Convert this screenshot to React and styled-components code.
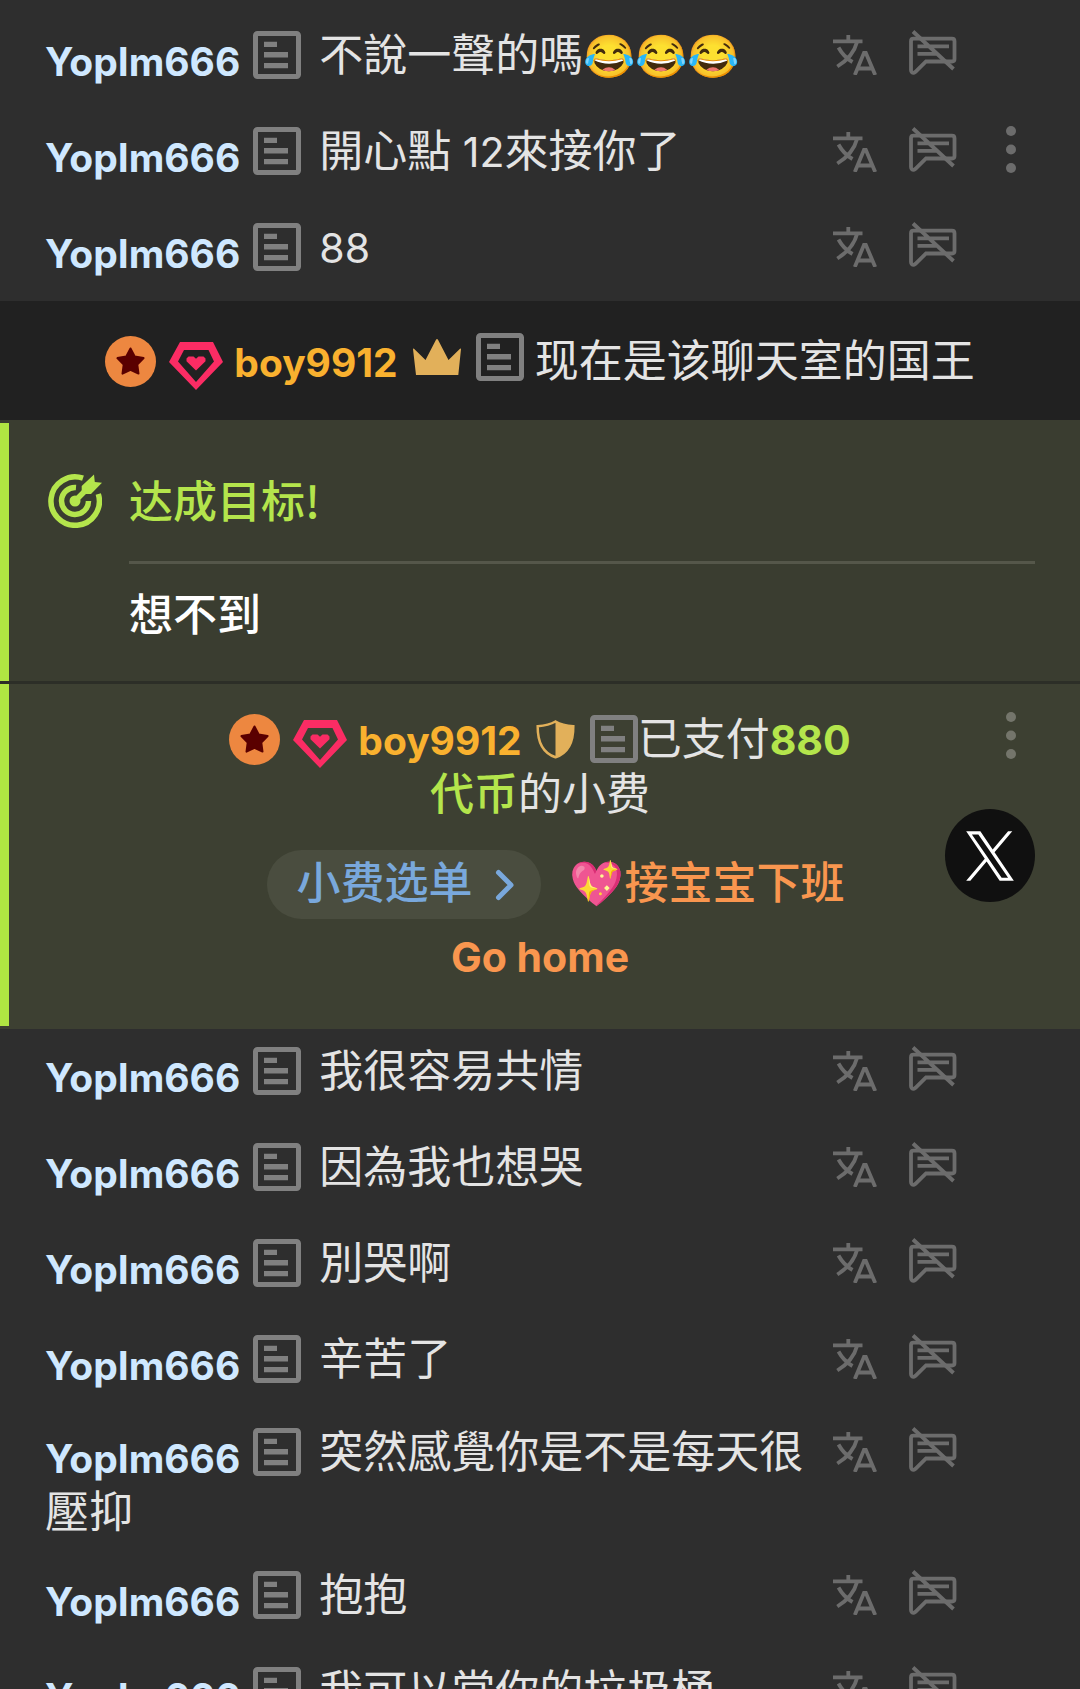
import React from 'react'
import styled, { createGlobalStyle } from 'styled-components'

const GlobalStyle = createGlobalStyle`
  body {
    margin: 0;
    background: #2e2e2e;
  }

  * {
    box-sizing: border-box;
  }

  button {
    padding: 0;
    border: 0;
    background: none;
    color: inherit;
    font: inherit;
    cursor: pointer;
  }

  svg {
    display: block;
  }
`

const Chat = styled.main`
  position: relative;
  height: 100vh;
  overflow: hidden;
  color: #e4e4e4;
  font-family: Roboto, 'Noto Sans CJK SC', 'Noto Color Emoji', sans-serif;
  font-size: 44px;
  line-height: 50px;
`

const MessageList = styled.ul`
  margin: 0;
  padding: ${(props) => props.$top || 0}px 0 0;
  list-style: none;
  font-family: Roboto, 'Noto Sans CJK TC', 'Noto Color Emoji', sans-serif;
`

const Row = styled.li`
  display: grid;
  grid-template-columns: minmax(0, 1fr) auto;
  align-content: center;
  align-items: start;
  min-height: 96px;
  padding: 14px 63px 15px 45px;
`

const MessageText = styled.div`
  padding-top: 1px;
`

const Actions = styled.div`
  display: grid;
  grid-template-columns: 44px 48px 28px;
  column-gap: 32px;
  color: #6c6c6c;
`

const MoreCell = styled.span`
  display: flex;
  justify-content: flex-end;
`

// latin words and digits sit a little smaller than the chinese around them
const Latin = styled.span`
  font-family: Inter, sans-serif;
  font-size: 41px;
`

const Emoji = styled.span`
  font-size: 42px;
`

const Author = styled.span`
  color: ${(props) => (props.$vip ? '#f9b12f' : '#cfe8ff')};
  font-family: Inter, sans-serif;
  font-size: 39px;
  font-weight: 700;
`

const ChatAuthor = styled(Author)`
  line-height: 58px;
  vertical-align: -5px;
`

const InlineIcon = styled.span`
  display: inline-block;
  margin-left: ${(props) => props.$left || 0}px;
  margin-right: ${(props) => props.$right || 0}px;
  vertical-align: ${(props) => -props.$drop}px;
`

const KingLine = styled.div`
  height: 119px;
  padding-top: 32px;
  background: #212121;
  text-align: center;
  white-space: nowrap;
`

const Panel = styled.section`
  padding: ${(props) => (props.$goal ? '3px 0 0' : '0 0 3px')};
  border-bottom: ${(props) => (props.$goal ? '3px solid #2c2e27' : '0')};
  background: ${(props) => (props.$goal ? '#3a3d30' : '#3d4032')};
`

const Goal = styled.div`
  display: grid;
  grid-template-columns: 54px minmax(0, 1fr);
  column-gap: 27px;
  height: 258px;
  padding: 51px 45px 0 48px;
  box-shadow: inset 9px 0 0 #b0e642;
`

const GoalTitle = styled.h2`
  margin: 0;
  padding-bottom: 37px;
  border-bottom: 3px solid #55574a;
  color: #b4e54c;
  font-family: 'Noto Sans CJK SC', sans-serif;
  font-size: 44px;
  font-weight: 500;
`

const GoalText = styled.p`
  margin: 0;
  padding-top: 27px;
  color: #ffffff;
  font-weight: 500;
`

const Tip = styled.div`
  position: relative;
  height: 342px;
  padding: 29px 225px 0;
  box-shadow: inset 9px 0 0 #b0e642;
  text-align: center;
`

const TipLine = styled.p`
  margin: 0;
  line-height: 54px;
`

const Amount = styled.strong`
  color: #b4e54c;
  font-weight: 500;
`

const BoldLatin = styled(Latin)`
  font-weight: 700;
`

const TipItem = styled.p`
  margin: 26px 0 0;
  color: #f9964f;
  font-weight: 500;
  line-height: 73px;
`

const MenuButton = styled.button`
  display: inline-flex;
  align-items: center;
  gap: 22px;
  height: 69px;
  margin: 0 29px 0 31px;
  padding: 0 26px 0 30px;
  border-radius: 35px;
  background: #4a4d3f;
  color: #79a8dc;
`

const TipMore = styled.button`
  position: absolute;
  top: 28px;
  right: 63px;
  color: #74756b;
`

const ShareButton = styled.a`
  position: absolute;
  top: 125px;
  right: 45px;
  display: flex;
  align-items: center;
  justify-content: center;
  width: 90px;
  height: 93px;
  border-radius: 50%;
  background: #101010;
  color: #ffffff;
`

const NoteIcon = () => (
  <svg width="48" height="48" viewBox="0 0 48 48" fill="#808080">
    <rect x="2.5" y="2.5" width="43" height="43" rx="2" fill="none" stroke="#808080" strokeWidth="5" />
    <path d="M11 10.7h13V16H11zM11 21h24v5.6H11zM11 32h24v5.2H11z" />
  </svg>
)

const TranslateIcon = () => (
  <svg width="44" height="45" viewBox="0 -5 44 45" fill="none" stroke="currentColor" strokeWidth="3.8">
    <path d="M0 6.3h29.5M15.3 0v6" />
    <path d="M24 7C21.500 17 14 25.500 4.300 31.500M5.500 12.500C8.500 18 13.500 23.500 19.500 27" />
    <path d="M21.800 40L31 17.800h1.800L42.200 40M25 33.500h14" />
  </svg>
)

const MuteIcon = () => (
  <svg width="48" height="45" viewBox="0 0 48 45" fill="none" stroke="currentColor" strokeWidth="3.8">
    <path d="M4.500 8.700h38.500q2.500 0 2.500 2.500v17.800q0 2.500-2.500 2.500H17L6.500 41.800Q4.500 43.500 3 42.500q-1-.7-1-2.500V11.200q0-2.500 2.500-2.500z" />
    <path d="M8.500 16.300h31.500M8.500 23.800h19M4 1.500l40.500 37.500" />
  </svg>
)

const DotsIcon = () => (
  <svg width="12" height="47" viewBox="0 0 12 47" fill="currentColor">
    <circle cx="6" cy="5" r="5" />
    <circle cx="6" cy="23.5" r="5" />
    <circle cx="6" cy="42" r="5" />
  </svg>
)

const StarBadge = () => (
  <svg width="51" height="51" viewBox="0 0 51 51">
    <circle cx="25.500" cy="25.500" r="25.500" fill="#ed8740" />
    <path
      d="M25.500 12.500l4.200 8 8.900 1.600-6.300 6.500 1.200 9-8-3.800-8 3.800 1.200-9-6.300-6.500 8.900-1.600z"
      fill="#5a0000"
      stroke="#5a0000"
      strokeWidth="2"
      strokeLinejoin="round"
    />
  </svg>
)

const GemBadge = () => (
  <svg width="54" height="48" viewBox="0 0 54 48" fill="#fb2c64">
    <path fillRule="evenodd" d="M11 0h33l10 20-27 28L0 20zM15 8L9 19.500 27 40l18-20.500L39.500 8z" />
    <path d="M27 28.500l-9.500-9.200v-2.800l2-2h5l2.500 2.300 2.500-2.300h5l2 2v2.800z" />
  </svg>
)

const CrownIcon = () => (
  <svg width="48" height="42" viewBox="0 0 48 42" fill="#e2b05a">
    <path d="M0 10q0-1 1-.3L12.500 21 23 .8q1-1.500 2 0L35.500 21 47 9.700q1-.7 1 .3l-2.700 26H3z" />
  </svg>
)

const ShieldIcon = () => (
  <svg width="39" height="39" viewBox="0 0 39 39" fill="none">
    <path d="M19.500 1.500C14 4.800 8 5.800 1.700 6.200 1.500 20 5.500 32.500 19.500 37.300 33.500 32.500 37.500 20 37.300 6.200 31 5.800 25 4.800 19.500 1.500z" stroke="#e2b05a" strokeWidth="2.500" />
    <path d="M19.500 1C25 4.800 31 5.800 37.300 6.200 37.500 20 33.500 32.500 19.500 37.500z" fill="#e2b05a" />
  </svg>
)

const TargetIcon = () => (
  <svg width="54" height="54" viewBox="0 0 54 54" fill="none" stroke="#b4e54c" strokeWidth="5.500">
    <path d="M35 4.200A24.200 24.200 0 1 0 50.300 20" />
    <path d="M28 13.500A13.500 13.500 0 1 0 40.500 27" />
    <path d="M27 27l13-13" />
    <circle cx="27" cy="27" r="5.500" fill="#b4e54c" stroke="none" />
    <path d="M46 .5l.8 7.500 7.200.8L43 20h-6.500l-2.800-2.500V12z" fill="#b4e54c" stroke="none" />
  </svg>
)

const ChevronIcon = () => (
  <svg width="20" height="32" viewBox="0 0 20 32" fill="none" stroke="currentColor" strokeWidth="5" strokeLinecap="round" strokeLinejoin="round">
    <path d="M3.500 3.500L16 16 3.500 28.500" />
  </svg>
)

const XLogo = () => (
  <svg width="52" height="54" viewBox="0 0 24 24" fill="currentColor" preserveAspectRatio="none">
    <path d="M14.095 10.316L22.286 1h-1.940l-7.116 8.088L7.551 1H1l8.589 12.231L1 23h1.941l7.509-8.543L16.449 23H23zM11.437 13.338l-.872-1.218-6.924-9.688h2.981l5.590 7.821.868 1.219 7.265 10.166h-2.981z" />
  </svg>
)

const Badges = () => (
  <>
    <InlineIcon $drop={10}><StarBadge /></InlineIcon>
    <InlineIcon $drop={13} $left={13} $right={11}><GemBadge /></InlineIcon>
  </>
)

const Message = ({ text, more }) => (
  <Row>
    <MessageText>
      <ChatAuthor>YopIm666</ChatAuthor>
      <InlineIcon $drop={8} $left={13} $right={18}><NoteIcon /></InlineIcon>
      {text}
    </MessageText>
    <Actions>
      <button aria-label="翻譯"><TranslateIcon /></button>
      <button aria-label="靜音"><MuteIcon /></button>
      <MoreCell>
        {more && <button aria-label="更多"><DotsIcon /></button>}
      </MoreCell>
    </Actions>
  </Row>
)

const before = [
  { text: <>不說一聲的嗎<Emoji>😂😂😂</Emoji></> },
  { text: <>開心點<Latin> 12</Latin>來接你了</>, more: true },
  { text: <Latin>88</Latin> },
]

const after = [
  { text: '我很容易共情' },
  { text: '因為我也想哭' },
  { text: '別哭啊' },
  { text: '辛苦了' },
  { text: '突然感覺你是不是每天很壓抑' },
  { text: '抱抱' },
  { text: '我可以當你的垃圾桶' },
]

const App = () => (
  <Chat>
    <GlobalStyle />
    <MessageList $top={13}>
      {before.map((item, i) => <Message key={i} {...item} />)}
    </MessageList>

    <KingLine>
      <Badges />
      <Author $vip>boy9912</Author>
      <InlineIcon $drop={4} $left={15} $right={15}><CrownIcon /></InlineIcon>
      <InlineIcon $drop={4} $right={11}><NoteIcon /></InlineIcon>
      现在是该聊天室的国王
    </KingLine>

    <Panel $goal>
      <Goal>
        <TargetIcon />
        <div>
          <GoalTitle>达成目标!</GoalTitle>
          <GoalText>想不到</GoalText>
        </div>
      </Goal>
    </Panel>

    <Panel>
      <Tip>
        <TipLine>
          <Badges />
          <Author $vip>boy9912</Author>
          <InlineIcon $drop={4} $left={14} $right={15}><ShieldIcon /></InlineIcon>
          <InlineIcon $drop={8}><NoteIcon /></InlineIcon>
          已支付<Amount><BoldLatin>880</BoldLatin> 代币</Amount>的小费
        </TipLine>
        <TipItem>
          <MenuButton>小费选单 <ChevronIcon /></MenuButton>
          💖接宝宝下班 <BoldLatin>Go home</BoldLatin>
        </TipItem>
        <TipMore aria-label="更多"><DotsIcon /></TipMore>
        <ShareButton href="#" aria-label="X"><XLogo /></ShareButton>
      </Tip>
    </Panel>

    <MessageList>
      {after.map((item, i) => <Message key={i} {...item} />)}
    </MessageList>
  </Chat>
)

export default App
